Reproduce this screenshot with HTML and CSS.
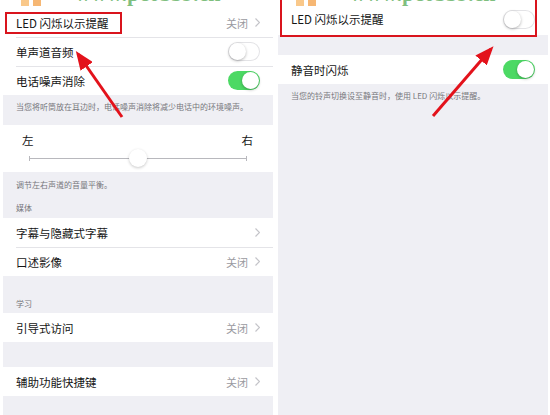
FILE: index.html
```html
<!DOCTYPE html>
<html lang="zh-CN">
<head>
    <meta charset="UTF-8">
    <meta name="viewport" content="width=device-width, initial-scale=1.0">
    <title>辅助功能 - 听觉</title>
    <link rel="stylesheet" href="styles.css">
</head>
<body>
    <div class="screen">
        <section class="panel">
            <div class="group first">
                <div class="row">
                    <span class="label boxed">LED 闪烁以示提醒</span>
                    <span class="detail">关闭<svg class="chevron" viewBox="0 0 5 9"><polyline points="0.5,0.5 4.5,4.5 0.5,8.5"/></svg></span>
                </div>
                <div class="row">
                    <span class="label">单声道音频</span>
                    <span class="switch"></span>
                </div>
                <div class="row">
                    <span class="label">电话噪声消除</span>
                    <span class="switch on"></span>
                </div>
            </div>
            <p class="note">当您将听筒放在耳边时，电话噪声消除将减少电话中的环境噪声。</p>

            <div class="group balance">
                <div class="balance-labels"><span>左</span><span>右</span></div>
                <div class="slider">
                    <span class="track"></span>
                    <span class="thumb"></span>
                </div>
            </div>
            <p class="note short">调节左右声道的音量平衡。</p>
            <p class="caption">媒体</p>

            <div class="group">
                <div class="row">
                    <span class="label">字幕与隐藏式字幕</span>
                    <span class="detail"><svg class="chevron" viewBox="0 0 5 9"><polyline points="0.5,0.5 4.5,4.5 0.5,8.5"/></svg></span>
                </div>
                <div class="row">
                    <span class="label">口述影像</span>
                    <span class="detail">关闭<svg class="chevron" viewBox="0 0 5 9"><polyline points="0.5,0.5 4.5,4.5 0.5,8.5"/></svg></span>
                </div>
            </div>
            <p class="caption wide">学习</p>

            <div class="group">
                <div class="row">
                    <span class="label">引导式访问</span>
                    <span class="detail">关闭<svg class="chevron" viewBox="0 0 5 9"><polyline points="0.5,0.5 4.5,4.5 0.5,8.5"/></svg></span>
                </div>
            </div>
            <div class="spacer"></div>
            <div class="group">
                <div class="row">
                    <span class="label">辅助功能快捷键</span>
                    <span class="detail">关闭<svg class="chevron" viewBox="0 0 5 9"><polyline points="0.5,0.5 4.5,4.5 0.5,8.5"/></svg></span>
                </div>
            </div>
            <div class="watermark"><span class="logo"></span>www.pc0359.cn</div>
        </section>

        <section class="panel">
            <div class="group first-right">
                <div class="row tall highlighted">
                    <span class="label">LED 闪烁以示提醒</span>
                    <span class="switch"></span>
                </div>
            </div>
            <div class="spacer small"></div>
            <div class="group">
                <div class="row">
                    <span class="label">静音时闪烁</span>
                    <span class="switch on"></span>
                </div>
            </div>
            <p class="note">当您的铃声切换设至静音时，使用 LED 闪烁以示提醒。</p>
            <div class="watermark"><span class="logo"></span>www.pc0359.cn</div>
        </section>

        <svg class="arrows" width="550" height="415" viewBox="0 0 550 415">
            <defs>
                <marker id="head" viewBox="0 0 10 10" refX="8" refY="5" markerWidth="19" markerHeight="15" markerUnits="userSpaceOnUse" orient="auto" preserveAspectRatio="none">
                    <path d="M0 0 L10 5 L0 10 z" fill="#e3121b"/>
                </marker>
            </defs>
            <line x1="122" y1="117" x2="78" y2="54" marker-end="url(#head)"/>
            <line x1="433" y1="116" x2="491" y2="49" marker-end="url(#head)"/>
        </svg>
    </div>
</body>
</html>
```

FILE: styles.css
```css
body {
    margin: 0;
    background: #fff;
    font-family: "Noto Sans CJK SC", "Noto Sans", sans-serif;
    color: #151515;
}

.screen {
    position: relative;
    width: 550px;
    height: 415px;
    overflow: hidden;
    display: flex;
    gap: 5px;
    padding-left: 3px;
    box-sizing: border-box;
}

.panel {
    position: relative;
    width: 270px;
    height: 415px;
    background: #efeff4;
    flex: none;
}

.group {
    background: #fff;
}

.group.first {
    padding-top: 8px;
}

.group.first-right {
    padding-top: 3px;
}

.row {
    position: relative;
    height: 29px;
    display: flex;
    align-items: center;
    justify-content: space-between;
    padding: 0 13px;
    font-size: 11.5px;
}

.row.tall {
    height: 32px;
}

.row + .row::before {
    content: "";
    position: absolute;
    top: 0;
    left: 13px;
    right: 0;
    border-top: 1px solid #e4e4e8;
}

.label.boxed {
    margin-left: -11px;
    padding: 2px 11px 2px 9px;
    border: 2px solid #d9141d;
    line-height: 14px;
}

.row.highlighted::after {
    content: "";
    position: absolute;
    top: -6px;
    left: 2px;
    right: 11px;
    bottom: -2px;
    border: 2px solid #d9141d;
}

.detail {
    display: flex;
    align-items: center;
    gap: 7px;
    color: #9a9a9f;
    font-size: 11px;
}

.chevron {
    width: 5px;
    height: 9px;
    fill: none;
    stroke: #c4c4c9;
    stroke-width: 1.2;
}

.switch {
    position: relative;
    width: 32px;
    height: 19px;
    border-radius: 10px;
    background: #fff;
    box-shadow: inset 0 0 0 1px #e3e3e6;
}

.switch::after {
    content: "";
    position: absolute;
    top: 1px;
    left: 1px;
    width: 17px;
    height: 17px;
    border-radius: 50%;
    background: #fff;
    box-shadow: 0 1px 3px rgba(0, 0, 0, 0.3);
}

.switch.on {
    background: #4cd964;
    box-shadow: none;
}

.switch.on::after {
    left: 14px;
}

.note {
    margin: 0;
    padding: 6px 13px 13px;
    font-size: 8px;
    line-height: 11px;
    color: #77777c;
}

.note.short {
    padding: 7px 13px 0;
}

.caption {
    margin: 0;
    padding: 12px 13px 5px;
    font-size: 8px;
    line-height: 11px;
    color: #77777c;
}

.caption.wide {
    padding-top: 22px;
    padding-bottom: 4px;
}

.balance {
    padding: 8px 20px 4px 19px;
}

.balance-labels {
    display: flex;
    justify-content: space-between;
    font-size: 11.5px;
    line-height: 14px;
}

.slider {
    position: relative;
    height: 20px;
    margin: 1px 6px 0 7px;
}

.track {
    position: absolute;
    left: 0;
    right: 0;
    top: 10px;
    border-top: 1px solid #b8b8bd;
}

.track::before,
.track::after {
    content: "";
    position: absolute;
    top: -3px;
    height: 5px;
    border-left: 1px solid #b8b8bd;
}

.track::before {
    left: 0;
}

.track::after {
    right: 0;
}

.thumb {
    position: absolute;
    left: 100px;
    top: 1px;
    width: 18px;
    height: 18px;
    border-radius: 50%;
    background: #fff;
    box-shadow: 0 1px 3px rgba(0, 0, 0, 0.22);
}

.spacer {
    height: 25px;
}

.spacer.small {
    height: 20px;
}

.watermark {
    position: absolute;
    top: -18px;
    left: 18px;
    display: flex;
    align-items: flex-end;
    gap: 34px;
    font-family: "Liberation Serif", serif;
    font-weight: bold;
    font-size: 22px;
    line-height: 24px;
    color: #4aa54a;
    opacity: 0.7;
}

.logo {
    width: 20px;
    height: 24px;
    background: linear-gradient(90deg, #f7b25a 0 40%, transparent 40% 60%, #f39a3a 60%);
}

.arrows {
    position: absolute;
    top: 0;
    left: 0;
    pointer-events: none;
}

.arrows line {
    stroke: #e3121b;
    stroke-width: 3;
}
```
